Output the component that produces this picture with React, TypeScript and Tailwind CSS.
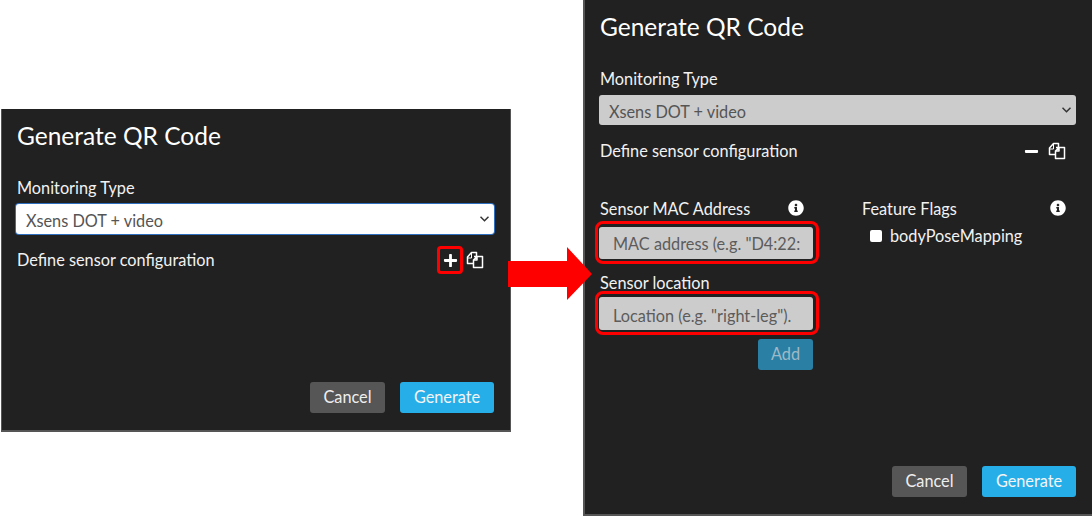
import React from "react";
import { FaPlus, FaMinus, FaInfoCircle } from "react-icons/fa";

function CopyIcon() {
  return (
    <svg width="18" height="18" viewBox="0 0 18 18" fill="none" stroke="white" strokeWidth="1.5" strokeLinejoin="round">
      <path d="M7 12.5H1.5V6L5.5 1.5H10.5V5" />
      <path d="M1.5 7H5.5V2" strokeWidth="1" />
      <path d="M8 5.5H11.5L16.5 5.5V16.5H7.5V12.5V9L11 5.5V9H7.5" />
    </svg>
  );
}

function Footer() {
  return (
    <div className="mt-auto flex justify-end gap-[15px] pb-[17px]">
      <button className="h-[31px] w-[75px] rounded-[3px] bg-[#565656] text-[16.3px] text-[#eeeeee]">Cancel</button>
      <button className="h-[31px] w-[94px] rounded-[3px] bg-[#26aee8] text-[16.3px] text-[#f4f4f4]">Generate</button>
    </div>
  );
}

function Header({ focused, toggle }: { focused: boolean; toggle: React.ReactNode }) {
  return (
    <>
      <h2 className="mt-[12px] pl-[1px] text-[24.5px] leading-[30px] font-normal text-white">Generate QR Code</h2>
      <label className="mt-[25px] block pl-[1px] text-[16.3px] leading-[24px] text-[#f2f2f2]">Monitoring Type</label>
      <div className="relative mt-[4px]">
        <select
          defaultValue="x"
          className={
            focused
              ? "block h-[30px] w-full appearance-none rounded-[3px] bg-white pt-[4px] pl-[10px] text-[16.3px] text-[#555555] outline-none shadow-[0_0_0_1px_#2f6fc0]"
              : "block h-[30px] w-full appearance-none rounded-[3px] bg-[#cccccc] pt-[4px] pl-[10px] text-[16.3px] text-[#555555] outline-none"
          }
        >
          <option value="x">Xsens DOT + video</option>
        </select>
        <svg className="pointer-events-none absolute top-[12px] right-[5px]" width="9" height="6" viewBox="0 0 9 6" fill="none" stroke="#333333" strokeWidth="1.5">
          <path d="M0.5 0.8L4.5 4.8L8.5 0.8" />
        </svg>
      </div>
      <div className="mt-[14px] flex h-[24px] items-center justify-between pl-[1px] text-[16.3px] text-[#f2f2f2]">
        <span>Define sensor configuration</span>
        <div className="mr-[10px] flex items-center gap-[8px]">
          {toggle}
          <CopyIcon />
        </div>
      </div>
    </>
  );
}

function HighlightedInput({ placeholder, tall }: { placeholder: string; tall?: boolean }) {
  return (
    <div className="relative">
      <input
        readOnly
        placeholder={placeholder}
        className={
          tall
            ? "block h-[33px] w-full rounded-[3px] bg-[#cccccc] pt-[3px] pr-[13px] pl-[14px] text-[16.3px] text-[#555555] outline-none placeholder:text-[#5c5c5c]"
            : "block h-[32px] w-full rounded-[3px] bg-[#cccccc] pr-[13px] pl-[14px] text-[16.3px] text-[#555555] outline-none placeholder:text-[#5c5c5c]"
        }
      />
      <span className="pointer-events-none absolute -top-[6px] -right-[6px] -bottom-[5px] -left-[4px] rounded-[8px] border-[3px] border-[#ff0000]" />
    </div>
  );
}

export default function App() {
  return (
    <div
      className="relative flex h-[517px] w-[1092px] items-start overflow-hidden bg-white pl-[1px]"
      style={{ fontFamily: "Lato, 'Noto Sans', sans-serif" }}
    >
      <section className="mt-[109px] flex h-[323px] w-[510px] flex-col border-r border-b-2 border-l border-[#555555] bg-[#212121] pr-[16px] pl-[14px]">
        <Header
          focused
          toggle={
            <span className="relative flex h-[16px] w-[16px] items-center justify-center text-white">
              <FaPlus size={15} />
              <span className="absolute -top-[6px] -right-[5px] -bottom-[6px] -left-[5px] rounded-[4px] border-[3px] border-[#ff0000]" />
            </span>
          }
        />
        <Footer />
      </section>

      <section className="ml-[72px] flex h-[516px] w-[509px] flex-col border-b-2 border-l-2 border-[#555555] bg-[#212121] pr-[16px] pl-[14px]">
        <Header
          focused={false}
          toggle={
            <span className="flex h-[16px] w-[16px] items-center justify-start text-white">
              <FaMinus size={15} />
            </span>
          }
        />
        <div className="mt-[33px] flex gap-[49px]">
          <div className="w-[214px]">
            <div className="flex h-[24px] items-center justify-between pl-[1px] text-[16.3px] text-[#f2f2f2]">
              <span className="pt-[2px]">Sensor MAC Address</span>
              <FaInfoCircle size={16} className="mr-[9px] text-white" />
            </div>
            <div className="mt-[7px]">
              <HighlightedInput placeholder={'MAC address (e.g. "D4:22:CD:00:12:34").'} />
            </div>
            <label className="mt-[12px] block h-[24px] pl-[1px] text-[16.3px] leading-[24px] text-[#f2f2f2]">Sensor location</label>
            <div className="mt-[2px]">
              <HighlightedInput tall placeholder={'Location (e.g. "right-leg").'} />
            </div>
            <div className="mt-[9px] flex justify-end">
              <button className="h-[31px] w-[55px] rounded-[3px] bg-[#2a7fa5] text-[16.3px] text-[#9fb9c6]">Add</button>
            </div>
          </div>
          <div className="flex-1">
            <div className="flex h-[24px] items-center justify-between text-[16.3px] text-[#f2f2f2]">
              <span className="pt-[2px]">Feature Flags</span>
              <FaInfoCircle size={16} className="mr-[10px] text-white" />
            </div>
            <label className="mt-[4px] ml-[8px] flex h-[24px] items-center gap-[8px] text-[16.3px] text-[#f2f2f2]">
              <input type="checkbox" className="h-[12px] w-[12px] appearance-none rounded-[2px] bg-white" />
              bodyPoseMapping
            </label>
          </div>
        </div>
        <Footer />
      </section>

      <svg className="absolute top-[247px] left-[508px]" width="85" height="54" viewBox="0 0 85 54">
        <polygon points="0,14 59,14 59,0 84,27 59,53 59,40 0,40" fill="#ff0000" />
      </svg>
    </div>
  );
}
